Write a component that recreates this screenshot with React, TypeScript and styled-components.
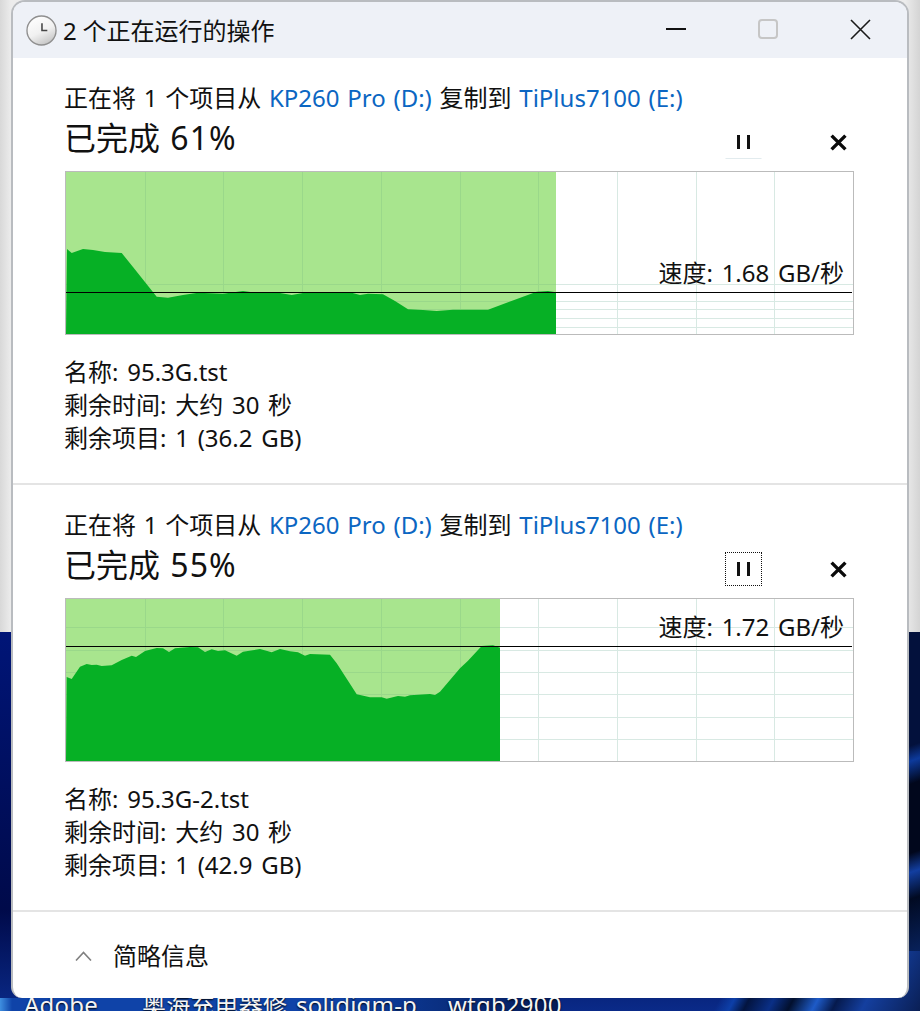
import React from "react";
import styled, { createGlobalStyle } from "styled-components";

const GlobalStyle = createGlobalStyle`
  html, body {
    margin: 0;
    padding: 0;
  }
  body {
    font-family: "Noto Sans", "Noto Sans CJK SC", sans-serif;
    color: #111;
  }
`;

const Desktop = styled.div`
  position: relative;
  width: 920px;
  height: 1011px;
  overflow: hidden;
  box-sizing: border-box;
  padding: 0 11px;
  background:
    linear-gradient(90deg, #d8d8d8 0, #ececec 11px, #ececec 905px, #d4d4d4 100%) top / 100% 632px no-repeat,
    linear-gradient(118deg, transparent 0 58%, #0d3fa8 61%, #03143f 64%, #0a2f86 69%, #02102e 73%, #1e5bc8 78%, #061a4d 82%, #143f9f 88%, #0a1f55 100%) right bottom / 460px 60px no-repeat,
    linear-gradient(160deg, #03113c 0 30%, #0d3a9c 34%, #01071c 40%, #01071c 58%, #123ea0 63%, #010a22 70%, #0f3a98 100%) right 632px / 13px 379px no-repeat,
    linear-gradient(90deg, #3f8fe0 0, #0f43a8 12px, #0f43a8 330px, #041a58 100%) left bottom / 560px 13px no-repeat,
    linear-gradient(180deg, #00127a 0, #001a8c 50%, #000a4a 90%, #0a2a88 100%);
`;

const DesktopLabel = styled.span<{ $left: number }>`
  position: absolute;
  left: ${(p) => p.$left}px;
  top: 988px;
  font-size: 24px;
  line-height: 33px;
  letter-spacing: 0.2px;
  color: #f4f4f4;
  white-space: nowrap;
  text-shadow: 0 1px 2px #000;
`;

const Window = styled.div`
  position: relative;
  box-sizing: border-box;
  height: 998px;
  display: flex;
  flex-direction: column;
  background: #fff;
  border: 2px solid #b9bcc0;
  border-bottom: 0;
  border-radius: 14px 14px 11px 11px;
  overflow: hidden;
`;

const TitleBar = styled.div`
  flex: none;
  height: 56px;
  display: flex;
  align-items: center;
  padding-left: 13px;
  background: #eef1f7;
`;

const Title = styled.div`
  flex: 1;
  margin-left: 6px;
  font-size: 24px;
  line-height: 33px;
  word-spacing: -0.5px;
`;

const WinButton = styled.div<{ $width: number }>`
  box-sizing: border-box;
  width: ${(p) => p.$width}px;
  height: 56px;
  padding-bottom: 2px;
  display: flex;
  align-items: center;
  justify-content: center;
`;

const Section = styled.section`
  flex: none;
  box-sizing: border-box;
  height: 427px;
  padding: 23px 53px 0 52px;
  border-bottom: 2px solid #e4e4e4;
`;

const CopyLine = styled.div`
  margin-left: -1px;
  font-size: 24px;
  line-height: 33px;
  word-spacing: 1.5px;
  white-space: nowrap;
`;

const Drive = styled.span`
  color: #0b66c2;
`;

const ProgressRow = styled.div`
  display: flex;
  align-items: flex-start;
  height: 45px;
  margin-top: 1px;
  margin-bottom: 11px;
`;

const Percent = styled.div`
  flex: 1;
  margin-left: -1px;
  padding-top: 1px;
  font-size: 32px;
  line-height: 44px;
  word-spacing: 2px;
`;

const PercentValue = styled.span`
  letter-spacing: 1px;
`;

const PauseButton = styled.div<{ $focused?: boolean }>`
  box-sizing: border-box;
  width: 37px;
  height: 34px;
  margin-top: 10px;
  margin-right: 60px;
  display: flex;
  align-items: center;
  justify-content: center;
  border: 1px dotted ${(p) => (p.$focused ? "#111" : "transparent")};
  border-bottom: 1px ${(p) => (p.$focused ? "dotted #111" : "solid #e2ebee")};
`;

const CancelButton = styled.div`
  width: 32px;
  height: 34px;
  margin-top: 10px;
  display: flex;
  align-items: center;
  justify-content: center;
`;

const Chart = styled.div`
  position: relative;
  box-sizing: border-box;
  width: 789px;
  height: 164px;
  border: 1px solid #bbb;
  background: #fff;
`;

const ChartSvg = styled.svg`
  display: block;
  width: 787px;
  height: 162px;
`;

const Speed = styled.div<{ $lineY: number }>`
  position: absolute;
  right: 9px;
  top: ${(p) => p.$lineY - 36}px;
  font-size: 24px;
  line-height: 33px;
  word-spacing: 2.5px;
  white-space: nowrap;
`;

const Info = styled.div`
  margin-top: 20px;
  margin-left: -1px;
`;

const InfoLine = styled.div`
  font-size: 24px;
  line-height: 33px;
  word-spacing: 2.5px;
  white-space: nowrap;
`;

const Footer = styled.div`
  flex: 1;
  display: flex;
  align-items: center;
  padding-left: 62px;
  padding-top: 1px;
`;

const FooterLabel = styled.div`
  margin-left: 21px;
  font-size: 24px;
  line-height: 33px;
`;

type Pt = [number, number];

const GRID_X = [145, 223, 302, 381, 460, 538, 617, 696, 774];

interface Job {
  top: number;
  percent: number;
  fillTo: number;
  speed: string;
  name: string;
  remaining: string;
  lineY: number;
  gridY: number[];
  points: Pt[];
  focused?: boolean;
}

const jobs: Job[] = [
  {
    top: 172,
    percent: 61,
    fillTo: 556,
    speed: "1.68 GB/秒",
    name: "95.3G.tst",
    remaining: "1 (36.2 GB)",
    lineY: 292,
    gridY: [284, 301, 309, 318, 327],
    points: [
      [67, 249], [71.7, 253], [83, 249], [93, 250], [105, 252], [121.7, 253], [133, 267], [156.7, 296.7],
      [168, 297.7], [183, 295], [198, 292.7], [223, 293.7], [243, 291], [257, 293], [280, 293], [291.7, 295],
      [303, 293], [340, 293], [351.7, 292.7], [360, 295], [368, 293.7], [383, 294.3], [395, 301], [408, 309.3],
      [423, 310], [436.7, 311], [453, 309.7], [488, 309.7], [523, 296.7], [536.7, 291.7], [548, 291], [556, 292.3],
    ],
  },
  {
    top: 599,
    percent: 55,
    fillTo: 500,
    speed: "1.72 GB/秒",
    name: "95.3G-2.tst",
    remaining: "1 (42.9 GB)",
    lineY: 646,
    gridY: [627, 650, 672, 694, 717, 739],
    focused: true,
    points: [
      [66.7, 677], [71.7, 679], [80, 666.7], [86.7, 664], [91.7, 665], [96.7, 664.7], [101.7, 666], [111.7, 665.3],
      [121.7, 660], [131.7, 655.7], [136, 657], [145, 651], [156.7, 648], [163, 648.3], [169, 652], [175, 648.3],
      [190, 647], [198, 647.3], [205, 652], [211.7, 649.3], [218, 651], [225, 650.3], [236.7, 655.7], [243, 651.7],
      [260, 649], [271.7, 652.3], [280, 649], [290, 651.3], [298, 652.3], [305, 655.7], [310, 654], [330, 654.7],
      [336.7, 663.3], [356.7, 694.3], [370, 697.3], [381.7, 697.3], [386.7, 698.7], [398, 696], [405, 696.7],
      [410, 695.3], [430, 694], [435, 695], [440, 691.7], [460, 668.3], [468, 660.7], [481.7, 646], [493, 645.3],
      [500, 647.7],
    ],
  },
];

// page coordinates of the reference -> chart coordinates
const CHART_LEFT = 66;

const ThroughputChart: React.FC<{ job: Job }> = ({ job }) => {
  const x = (v: number) => v - CHART_LEFT;
  const y = (v: number) => v - job.top;
  const right = x(job.fillTo);
  const area = job.points.map(([px, py]) => `${x(px).toFixed(1)},${y(py).toFixed(1)}`).join(" ");

  return (
    <Chart>
      <ChartSvg viewBox="0 0 787 162">
        {GRID_X.map((g) => (
          <line key={g} x1={x(g) + 0.5} x2={x(g) + 0.5} y1={0} y2={162} stroke="#d8e9e3" />
        ))}
        {job.gridY.map((g) => (
          <line key={g} x1={0} x2={787} y1={y(g) + 0.5} y2={y(g) + 0.5} stroke="#d8e9e3" />
        ))}
        <rect x={0} y={0} width={right} height={162} fill="#a8e58e" />
        {GRID_X.filter((g) => g < job.fillTo).map((g) => (
          <line key={g} x1={x(g) + 0.5} x2={x(g) + 0.5} y1={0} y2={162} stroke="#9ad88a" />
        ))}
        {job.gridY.map((g) => (
          <line key={g} x1={0} x2={right} y1={y(g) + 0.5} y2={y(g) + 0.5} stroke="#9ad88a" />
        ))}
        <polygon points={`0,162 ${area} ${right},162`} fill="#06b025" />
        <line x1={0} x2={786} y1={y(job.lineY) + 0.5} y2={y(job.lineY) + 0.5} stroke="#000" />
      </ChartSvg>
      <Speed $lineY={job.lineY - job.top}>速度: {job.speed}</Speed>
    </Chart>
  );
};

const ClockIcon = () => (
  <svg width="31" height="31" viewBox="0 0 32 32">
    <defs>
      <linearGradient id="clockFace" x1="0.2" y1="0" x2="0.7" y2="1">
        <stop offset="0" stopColor="#fff" />
        <stop offset="0.55" stopColor="#f1f1f1" />
        <stop offset="1" stopColor="#c2c2c2" />
      </linearGradient>
    </defs>
    <circle cx="16" cy="16" r="15" fill="url(#clockFace)" stroke="#8f8f8f" strokeWidth="1.4" />
    <path d="M16.5 8.5v7.5h5.5" fill="none" stroke="#444" strokeWidth="1.6" />
  </svg>
);

const PauseIcon = () => (
  <svg width="13" height="14" viewBox="0 0 13 14">
    <path d="M0 0h3v14H0zM10 0h3v14h-3z" fill="#111" />
  </svg>
);

const CancelIcon = () => (
  <svg width="17" height="17" viewBox="0 0 16 16">
    <path d="M1.5 1.5l13 13M14.5 1.5l-13 13" stroke="#0a0a0a" strokeWidth="3.2" fill="none" />
  </svg>
);

const JobSection: React.FC<{ job: Job }> = ({ job }) => (
  <Section>
    <CopyLine>
      正在将 1 个项目从 <Drive>KP260 Pro (D:)</Drive> 复制到 <Drive>TiPlus7100 (E:)</Drive>
    </CopyLine>
    <ProgressRow>
      <Percent>
        已完成 <PercentValue>{job.percent}%</PercentValue>
      </Percent>
      <PauseButton $focused={job.focused}>
        <PauseIcon />
      </PauseButton>
      <CancelButton>
        <CancelIcon />
      </CancelButton>
    </ProgressRow>
    <ThroughputChart job={job} />
    <Info>
      <InfoLine>名称: {job.name}</InfoLine>
      <InfoLine>剩余时间: 大约 30 秒</InfoLine>
      <InfoLine>剩余项目: {job.remaining}</InfoLine>
    </Info>
  </Section>
);

export default function App() {
  return (
    <Desktop>
      <GlobalStyle />
      <DesktopLabel $left={24}>Adobe</DesktopLabel>
      <DesktopLabel $left={142}>奥海充电器修</DesktopLabel>
      <DesktopLabel $left={296}>solidigm-p</DesktopLabel>
      <DesktopLabel $left={448}>wtgb2900</DesktopLabel>
      <Window>
        <TitleBar>
          <ClockIcon />
          <Title>2 个正在运行的操作</Title>
          <WinButton $width={91}>
            <svg width="20" height="2" viewBox="0 0 20 2">
              <path d="M0 1h20" stroke="#111" strokeWidth="2" />
            </svg>
          </WinButton>
          <WinButton $width={93}>
            <svg width="20" height="20" viewBox="0 0 20 20">
              <rect x="1" y="1" width="18" height="18" rx="3" fill="none" stroke="#c6c6c6" strokeWidth="2" />
            </svg>
          </WinButton>
          <WinButton $width={93}>
            <svg width="21" height="21" viewBox="0 0 21 21">
              <path d="M1 1l19 19M20 1L1 20" stroke="#1a1a1a" strokeWidth="1.6" fill="none" />
            </svg>
          </WinButton>
        </TitleBar>
        {jobs.map((job) => (
          <JobSection key={job.name} job={job} />
        ))}
        <Footer>
          <svg width="17" height="10" viewBox="0 0 17 10">
            <path d="M1 9.5L8.5 1.5 16 9.5" fill="none" stroke="#808080" strokeWidth="1.6" />
          </svg>
          <FooterLabel>简略信息</FooterLabel>
        </Footer>
      </Window>
    </Desktop>
  );
}
